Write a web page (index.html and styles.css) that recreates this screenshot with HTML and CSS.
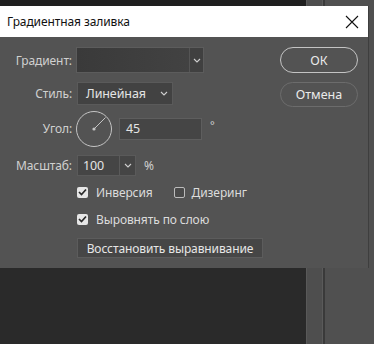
FILE: index.html
```html
<!DOCTYPE html>
<html lang="ru">
<head>
<meta charset="utf-8">
<title>Градиентная заливка</title>
<link rel="stylesheet" href="styles.css">
</head>
<body>
<div class="app">
  <div class="canvas-area"></div>
  <div class="col-a"></div>
  <div class="col-line"></div>
  <div class="col-b"></div>
</div>

<div class="dialog">
  <div class="titlebar">
    <span class="title">Градиентная заливка</span>
    <svg class="close" width="14" height="14" viewBox="0 0 14 14"><path d="M1 1 L13 13 M13 1 L1 13" stroke="#111" stroke-width="1.1" fill="none"/></svg>
  </div>
  <div class="body">
    <div class="form">
      <div class="row r-grad">
        <label class="lbl">Градиент:</label>
        <div class="grad-box">
          <div class="swatch"></div>
          <div class="drop-btn"><svg width="8" height="5" viewBox="0 0 8 5"><path d="M1 1 L4 4 L7 1" stroke="#cfcfcf" stroke-width="1.1" fill="none"/></svg></div>
        </div>
      </div>
      <div class="row r-style">
        <label class="lbl">Стиль:</label>
        <div class="select">
          <span>Линейная</span>
          <svg width="8" height="5" viewBox="0 0 8 5"><path d="M1 1 L4 4 L7 1" stroke="#cfcfcf" stroke-width="1.1" fill="none"/></svg>
        </div>
      </div>
      <div class="row r-angle">
        <label class="lbl">Угол:</label>
        <svg class="dial" width="38" height="38" viewBox="0 0 38 38">
          <circle cx="19" cy="19" r="17.5" stroke="#c4c4c4" stroke-width="1" fill="none"/>
          <line x1="19" y1="19" x2="30.5" y2="7.5" stroke="#c4c4c4" stroke-width="1"/>
          <circle cx="19" cy="19" r="1.6" fill="#c4c4c4"/>
        </svg>
        <div class="input angle-input">45</div>
        <span class="deg">°</span>
      </div>
      <div class="row r-scale">
        <label class="lbl">Масштаб:</label>
        <div class="combo">
          <div class="combo-val">100</div>
          <div class="combo-btn"><svg width="8" height="5" viewBox="0 0 8 5"><path d="M1 1 L4 4 L7 1" stroke="#cfcfcf" stroke-width="1.1" fill="none"/></svg></div>
        </div>
        <span class="pct">%</span>
      </div>
      <div class="row r-checks">
        <div class="check on"><span class="box"><svg width="9" height="8" viewBox="0 0 9 8"><path d="M1 4 L3.5 6.5 L8 1.5" stroke="#2a2a2a" stroke-width="1.7" fill="none"/></svg></span>Инверсия</div>
        <div class="check off"><span class="box"></span>Дизеринг</div>
      </div>
      <div class="row r-align">
        <div class="check on"><span class="box"><svg width="9" height="8" viewBox="0 0 9 8"><path d="M1 4 L3.5 6.5 L8 1.5" stroke="#2a2a2a" stroke-width="1.7" fill="none"/></svg></span>Выровнять по слою</div>
      </div>
      <div class="row r-reset">
        <button class="reset">Восстановить выравнивание</button>
      </div>
    </div>
    <div class="actions">
      <button class="pill ok">ОК</button>
      <button class="pill cancel">Отмена</button>
    </div>
  </div>
</div>
</body>
</html>
```

FILE: styles.css
```css
* { box-sizing: border-box; }
html, body { margin: 0; padding: 0; }
body {
  width: 374px;
  height: 344px;
  overflow: hidden;
  position: relative;
  font-family: "Noto Sans", "Open Sans", sans-serif;
  letter-spacing: -0.1px;
  background: #2b2b2b;
}
.app {
  display: flex;
  height: 344px;
}
.canvas-area { width: 306px; background: #2a2a2a; border-top: 6px solid #1f1f1f; }
.col-a { width: 16px; background: #4e4e4e; border-left: 1px solid #595959; }
.col-line { width: 3px; background: #3a3a3a; border-left: 1px solid #5a5a5a; }
.col-b { flex: 1; background: #505050; }

.dialog {
  position: absolute;
  left: 0;
  top: 6px;
  width: 369px;
  height: 262px;
  display: flex;
  flex-direction: column;
  border-right: 1px solid #3e3e3e;
}
.titlebar {
  height: 31px;
  background: #ffffff;
  display: flex;
  align-items: center;
  justify-content: space-between;
  padding: 0 9px 0 7px;
}
.title { font-size: 12px; color: #111; }
.close { margin-top: 1px; }

.body {
  flex: 1;
  background: #535353;
  display: flex;
  justify-content: space-between;
  padding: 10px 10px 0 0;
  color: #d8d8d8;
  font-size: 12px;
}
.form { display: flex; flex-direction: column; }
.row { display: flex; align-items: center; }
.lbl { width: 72px; text-align: right; color: #d0d0d0; margin-right: 4px; }

.r-grad { height: 26px; }
.grad-box { display: flex; height: 26px; border: 1px solid #5c5c5c; }
.swatch { width: 113px; background: linear-gradient(90deg, #3a3a3a, #424242); border-right: 1px solid #555; }
.drop-btn { width: 13px; background: #404040; display: flex; align-items: center; justify-content: center; }

.r-style { height: 23px; margin-top: 9px; }
.select {
  margin-left: 1px;
  width: 96px; height: 23px;
  background: #424242;
  border: 1px solid #5a5a5a;
  display: flex; align-items: center; justify-content: space-between;
  padding: 0 4px 0 8px;
  color: #e4e4e4;
  font-size: 12.5px;
}

.r-angle { height: 37px; margin-top: 5px; }
.dial { margin-left: -1px; }
.angle-input {
  margin-left: 6px;
  width: 83px; height: 22px;
  background: #454545;
  border: 1px solid #5e5e5e;
  padding-left: 6px;
  display: flex; align-items: center;
  color: #e4e4e4;
  font-size: 12.5px;
}
.deg { margin-left: 8px; margin-top: -8px; font-size: 11px; color: #d0d0d0; }

.r-scale { height: 21px; margin-top: 8px; }
.combo { margin-left: 1px; display: flex; height: 21px; border: 1px solid #5a5a5a; background: #454545; }
.combo-val { width: 42px; padding-left: 5px; display: flex; align-items: center; color: #e4e4e4; font-size: 12.5px; border-right: 1px solid #5a5a5a; }
.combo-btn { width: 15px; display: flex; align-items: center; justify-content: center; }
.pct { margin-left: 8px; color: #d0d0d0; }

.r-checks { margin-top: 9px; height: 14px; padding-left: 77px; }
.r-align { margin-top: 13px; height: 14px; padding-left: 77px; }
.check { display: flex; align-items: center; color: #dcdcdc; font-size: 12px; }
.check .box {
  width: 11px; height: 11px; border-radius: 2px;
  margin-right: 8px;
  display: flex; align-items: center; justify-content: center;
}
.check.on .box { background: #e6e6e6; }
.check.off .box { border: 1px solid #bcbcbc; background: #4a4a4a; margin-right: 7px; }
.r-checks .check.off { margin-left: 21px; }

.r-reset { margin-top: 12px; padding-left: 77px; }
.reset {
  width: 186px; height: 20px;
  background: #464646;
  border: 1px solid #5c5c5c;
  color: #e6e6e6;
  font-family: inherit;
  letter-spacing: -0.1px;
  font-size: 12px;
  padding: 0;
}

.actions { display: flex; flex-direction: column; gap: 9px; }
.pill {
  width: 78px; height: 26px;
  border-radius: 13px;
  background: transparent;
  font-family: inherit;
  font-size: 12.5px;
  color: #eaeaea;
  padding: 0;
}
.pill.ok { border: 1.5px solid #c4c4c4; }
.pill.cancel { border: 1.5px solid #6c6c6c; height: 25px; }
```
